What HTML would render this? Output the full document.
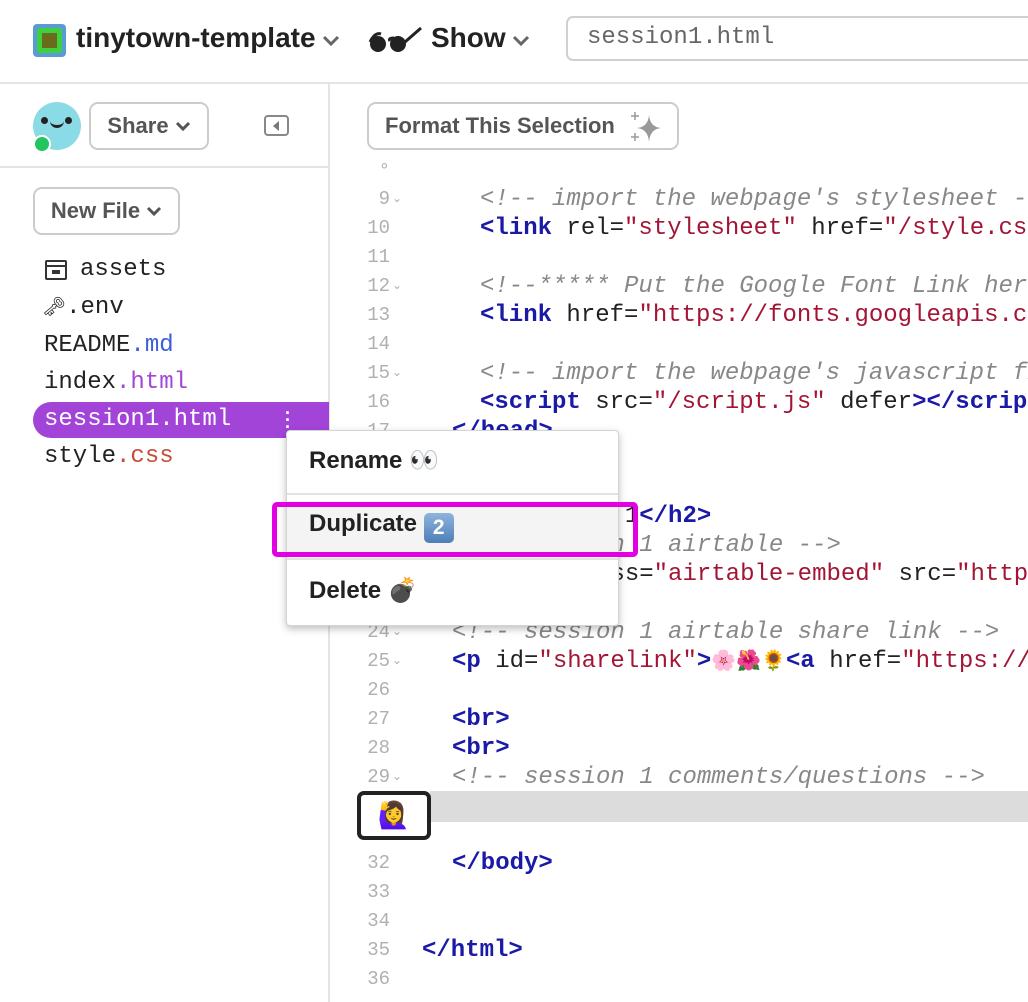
<!DOCTYPE html>
<html><head><meta charset="utf-8"><style>
*{box-sizing:border-box;margin:0;padding:0}
body{width:1028px;height:1002px;overflow:hidden;background:#fff;position:relative;font-family:"Liberation Sans",sans-serif;color:#222}
.abs{position:absolute}
.btn{position:absolute;border:2px solid #ccc;border-radius:9px;background:#fff;font-weight:bold;color:#555;font-size:22px;display:flex;align-items:center;justify-content:center}
.mono{font-family:"Liberation Mono","DejaVu Sans Mono",monospace}
.ln{position:absolute;left:330px;width:60px;text-align:right;font-family:"Liberation Mono",monospace;font-size:19px;color:#b0b0b0;height:29px;line-height:29px}
.ln i{font-style:normal;font-size:12px;position:absolute;left:62px}
.cl{position:absolute;font-family:"Liberation Mono",monospace;font-size:24px;height:29px;line-height:29px;white-space:pre;color:#222}
.t{color:#1a1aa6;font-weight:bold}.s{color:#a31535}.c{color:#888;font-style:italic}
.fi{position:absolute;left:44px;font-family:"Liberation Mono",monospace;font-size:24px;line-height:30px;color:#222}
.chev{display:inline-block;vertical-align:middle;margin-left:6px}
</style></head><body>
<!-- top bar -->
<div class="abs" style="left:33px;top:24px;width:33px;height:33px;background:#5b9bd5;border-radius:4px"><div style="margin:4px;width:25px;height:25px;background:#3fd03f;border-radius:3px;padding:5px"><div style="width:15px;height:15px;background:#6b6b1d"></div></div></div>
<div class="abs" style="left:76px;top:22px;font-size:28px;font-weight:bold;color:#222">tinytown-template<svg class="chev" width="18" height="12" viewBox="0 0 18 12"><path d="M2 3l7 7 7-7" stroke="#666" stroke-width="3" fill="none"/></svg></div>
<svg class="abs" style="left:367px;top:26px" width="56" height="28" viewBox="0 0 56 28"><circle cx="11" cy="18" r="8" fill="#222"/><circle cx="31" cy="18" r="8" fill="#222"/><path d="M3 16 Q8 6 14 8 M23 15 Q21 12 27 12 M38 16 L54 2" stroke="#222" stroke-width="3" fill="none"/></svg>
<div class="abs" style="left:431px;top:22px;font-size:28px;font-weight:bold;color:#222">Show<svg class="chev" width="18" height="12" viewBox="0 0 18 12"><path d="M2 3l7 7 7-7" stroke="#666" stroke-width="3" fill="none"/></svg></div>
<div class="abs" style="left:566px;top:16px;width:480px;height:45px;border:2px solid #d0d0d0;border-radius:7px"></div>
<div class="abs mono" style="left:587px;top:24px;font-size:24px;color:#666">session1.html</div>
<div class="abs" style="left:0;top:82px;width:1028px;height:2px;background:#e4e4e4"></div>
<div class="abs" style="left:328px;top:84px;width:2px;height:918px;background:#e4e4e4"></div>
<div class="abs" style="left:0;top:166px;width:328px;height:2px;background:#e4e4e4"></div>
<!-- sidebar -->
<div class="abs" style="left:33px;top:102px;width:48px;height:48px;border-radius:50%;background:#8adbe6"></div>
<div class="abs" style="left:41px;top:117px;width:7px;height:7px;border-radius:50%;background:#222"></div>
<div class="abs" style="left:65px;top:117px;width:7px;height:7px;border-radius:50%;background:#222"></div>
<div class="abs" style="left:50px;top:119px;width:14px;height:9px;border-bottom:3px solid #222;border-radius:0 0 8px 8px"></div>
<div class="abs" style="left:33px;top:135px;width:18px;height:18px;border-radius:50%;background:#22c55e;border:2px solid #fff"></div>
<div class="btn" style="left:89px;top:102px;width:120px;height:48px">Share<svg class="chev" width="16" height="11" viewBox="0 0 16 11"><path d="M2 2l6 6 6-6" stroke="#555" stroke-width="3" fill="none"/></svg></div>
<div class="abs" style="left:264px;top:115px;width:25px;height:21px;border:2px solid #888;border-radius:4px"></div>
<div class="abs" style="left:273px;top:121px;width:0;height:0;border-top:5px solid transparent;border-bottom:5px solid transparent;border-right:6px solid #777"></div>
<div class="btn" style="left:33px;top:187px;width:147px;height:48px">New File<svg class="chev" width="16" height="11" viewBox="0 0 16 11"><path d="M2 2l6 6 6-6" stroke="#555" stroke-width="3" fill="none"/></svg></div>
<div class="abs" style="left:45px;top:260px;width:22px;height:20px;border:2px solid #333;border-radius:2px"></div>
<div class="abs" style="left:45px;top:265px;width:22px;height:2px;background:#333"></div>
<div class="abs" style="left:52px;top:270px;width:8px;height:4px;border:2px solid #333"></div>
<div class="fi" style="top:255px;left:80px">assets</div>
<div class="fi" style="top:293px;left:42px"><span style="font-size:19px">&#x1F5DD;</span>.env</div>
<div class="fi" style="top:331px">README<span style="color:#3b5fd9">.md</span></div>
<div class="fi" style="top:368px">index<span style="color:#a446d8">.html</span></div>
<div class="abs" style="left:33px;top:402px;width:296px;height:36px;background:#a344d9;border-radius:18px 0 0 18px"></div>
<div class="fi" style="top:405px;color:#fff">session1.html</div>
<div class="abs" style="left:285px;top:410px;color:#fff;font-size:18px;font-weight:bold;line-height:7px">·<br>·<br>·</div>
<div class="fi" style="top:442px">style<span style="color:#c94a3a">.css</span></div>
<!-- editor -->
<div class="btn" style="left:367px;top:102px;width:312px;height:48px;justify-content:flex-start;padding-left:16px">Format This Selection</div>
<svg class="abs" style="left:627px;top:110px" width="36" height="34" viewBox="0 0 36 34"><path d="M22 5 Q23 17 34 18 Q23 19 22 32 Q21 19 10 18 Q21 17 22 5Z" fill="#999"/><path d="M8 2v8M4 6h8M8 23v8M4 27h8" stroke="#999" stroke-width="1.5"/></svg>
<div class="ln" style="top:157px">&#176;</div>
<div class="ln" style="top:185px">9<i>&#8964;</i></div><div class="cl c" style="left:480px;top:185px">&lt;!-- import the webpage's stylesheet --&gt;</div>
<div class="ln" style="top:214px">10</div><div class="cl" style="left:480px;top:214px"><span class="t">&lt;link</span> rel=<span class="s">"stylesheet"</span> href=<span class="s">"/style.css"</span></div>
<div class="ln" style="top:243px">11</div>
<div class="ln" style="top:272px">12<i>&#8964;</i></div><div class="cl c" style="left:480px;top:272px">&lt;!--***** Put the Google Font Link here</div>
<div class="ln" style="top:301px">13</div><div class="cl" style="left:480px;top:301px"><span class="t">&lt;link</span> href=<span class="s">"https://fonts.googleapis.com</span></div>
<div class="ln" style="top:330px">14</div>
<div class="ln" style="top:359px">15<i>&#8964;</i></div><div class="cl c" style="left:480px;top:359px">&lt;!-- import the webpage's javascript file</div>
<div class="ln" style="top:388px">16</div><div class="cl" style="left:480px;top:388px"><span class="t">&lt;script</span> src=<span class="s">"/script.js"</span> defer<span class="t">&gt;&lt;/script&gt;</span></div>
<div class="ln" style="top:417px">17</div><div class="cl t" style="left:452px;top:417px">&lt;/head&gt;</div>
<div class="cl" style="left:452px;top:502px"><span class="t">&lt;h2&gt;</span>Session 1<span class="t">&lt;/h2&gt;</span></div>
<div class="cl c" style="left:452px;top:531px">&lt;!-- session 1 airtable --&gt;</div>
<div class="cl" style="left:452px;top:560px"><span class="t">&lt;iframe</span> class=<span class="s">"airtable-embed"</span> src=<span class="s">"https</span></div>
<div class="ln" style="top:618px">24<i>&#8964;</i></div><div class="cl c" style="left:452px;top:618px">&lt;!-- session 1 airtable share link --&gt;</div>
<div class="ln" style="top:647px">25<i>&#8964;</i></div><div class="cl" style="left:452px;top:647px"><span class="t">&lt;p</span> id=<span class="s">"sharelink"</span><span class="t">&gt;</span><span style="font-size:20px">🌸🌺🌻</span><span class="t">&lt;a</span> href=<span class="s">"https://</span></div>
<div class="ln" style="top:676px">26</div>
<div class="ln" style="top:705px">27</div><div class="cl t" style="left:452px;top:705px">&lt;br&gt;</div>
<div class="ln" style="top:734px">28</div><div class="cl t" style="left:452px;top:734px">&lt;br&gt;</div>
<div class="ln" style="top:763px">29<i>&#8964;</i></div><div class="cl c" style="left:452px;top:763px">&lt;!-- session 1 comments/questions --&gt;</div>
<div class="abs" style="left:430px;top:791px;width:598px;height:31px;background:#dcdcdc"></div>
<div class="abs" style="left:357px;top:791px;width:74px;height:49px;border:4px solid #222;border-radius:7px;background:#fff;text-align:center;font-size:26px;line-height:40px">🙋‍♀️</div>
<div class="ln" style="top:849px">32</div><div class="cl t" style="left:452px;top:849px">&lt;/body&gt;</div>
<div class="ln" style="top:878px">33</div>
<div class="ln" style="top:907px">34</div>
<div class="ln" style="top:936px">35</div><div class="cl t" style="left:422px;top:936px">&lt;/html&gt;</div>
<div class="ln" style="top:965px">36</div>
<!-- context menu -->
<div class="abs" style="left:286px;top:430px;width:333px;height:196px;background:#fff;border:1px solid #d4d4d4;border-radius:4px;box-shadow:0 3px 8px rgba(0,0,0,.25)"></div>
<div class="abs" style="left:287px;top:493px;width:331px;height:2px;background:#e2e2e2"></div>
<div class="abs" style="left:287px;top:501px;width:331px;height:54px;background:#f4f4f4"></div>
<div class="abs" style="left:287px;top:558px;width:331px;height:2px;background:#e2e2e2"></div>
<div class="abs" style="left:309px;top:446px;font-size:24px;font-weight:bold;color:#222">Rename <span style="font-size:24px">👀</span></div>
<div class="abs" style="left:309px;top:510px;font-size:24px;font-weight:bold;color:#222">Duplicate <span style="display:inline-block;width:30px;height:30px;background:linear-gradient(#8fb4dd,#4c7fb8);border-radius:5px;color:#fff;text-align:center;line-height:30px;font-size:21px;vertical-align:-3px">2</span></div>
<div class="abs" style="left:309px;top:576px;font-size:24px;font-weight:bold;color:#222">Delete <span style="font-size:24px">💣</span></div>
<div class="abs" style="left:272px;top:502px;width:366px;height:55px;border:5px solid #e300e3;border-radius:5px"></div>
</body></html>
